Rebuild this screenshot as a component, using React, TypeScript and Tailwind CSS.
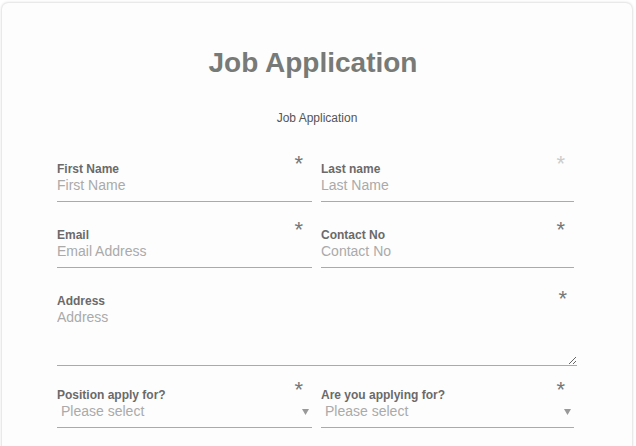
import React from 'react'

function Star({ light = false, className = '' }: { light?: boolean; className?: string }) {
  return (
    <span
      className={`absolute right-[9px] -top-[9px] text-[22px] leading-[22px] ${light ? 'text-[#cccccc]' : 'text-[#777777]'} ${className}`}
    >
      *
    </span>
  )
}

function TextField({ label, placeholder, light = false }: { label: string; placeholder: string; light?: boolean }) {
  return (
    <div className="relative">
      <Star light={light} />
      <label className="block text-xs leading-[14px] font-bold text-[#6a6a6a]">{label}</label>
      <input
        type="text"
        placeholder={placeholder}
        className="block w-full bg-transparent border-b border-[#aaaaaa] pt-[1px] pb-[8px] text-sm leading-4 text-[#555] placeholder:text-[#aaaaaa] outline-none"
      />
    </div>
  )
}

function SelectField({ label }: { label: string }) {
  return (
    <div className="relative">
      <Star />
      <label className="block text-xs leading-[14px] font-bold text-[#6a6a6a]">{label}</label>
      <div className="flex items-center justify-between border-b border-[#aaaaaa] pt-[1px] pb-[8px] pl-[4px] pr-[3px]">
        <span className="text-sm leading-4 text-[#aaaaaa]">Please select</span>
        <svg width="7" height="6" viewBox="0 0 7 6" className="mt-[1px]">
          <path d="M0 0h7L3.5 6z" fill="#999999" />
        </svg>
      </div>
    </div>
  )
}

export default function App() {
  return (
    <div className="min-h-screen bg-white pl-[2px] pt-[3px] font-['Liberation_Sans',Arial,sans-serif]">
      <div className="w-[630px] min-h-[460px] rounded-md bg-[#fdfdfd] shadow-[0_0_3px_rgba(0,0,0,0.25)] pl-[55px] pt-[44px]">
        <div className="w-[520px]">
          <h1 className="pr-[8px] text-center text-[28px] leading-[32px] font-bold text-[#777a77]">Job Application</h1>
          <p className="mt-[32px] text-center text-xs leading-[14px] text-[#555555]">Job Application</p>

          <div className="mt-[37px] grid grid-cols-[255px_253px] gap-x-[9px] gap-y-[26px]">
            <TextField label="First Name" placeholder="First Name" />
            <TextField label="Last name" placeholder="Last Name" light />
            <TextField label="Email" placeholder="Email Address" />
            <TextField label="Contact No" placeholder="Contact No" />
          </div>

          <div className="relative mt-[26px]">
            <Star className="!right-[10px] !-top-[6px]" />
            <label className="block text-xs leading-[14px] font-bold text-[#6a6a6a]">Address</label>
            <textarea
              placeholder="Address"
              className="block w-full h-[58px] bg-transparent border-b border-[#aaaaaa] pt-[1px] text-sm leading-4 text-[#555] placeholder:text-[#aaaaaa] outline-none"
            />
          </div>

          <div className="mt-[22px] grid grid-cols-[255px_253px] gap-x-[9px]">
            <SelectField label="Position apply for?" />
            <SelectField label="Are you applying for?" />
          </div>
        </div>
      </div>
    </div>
  )
}
